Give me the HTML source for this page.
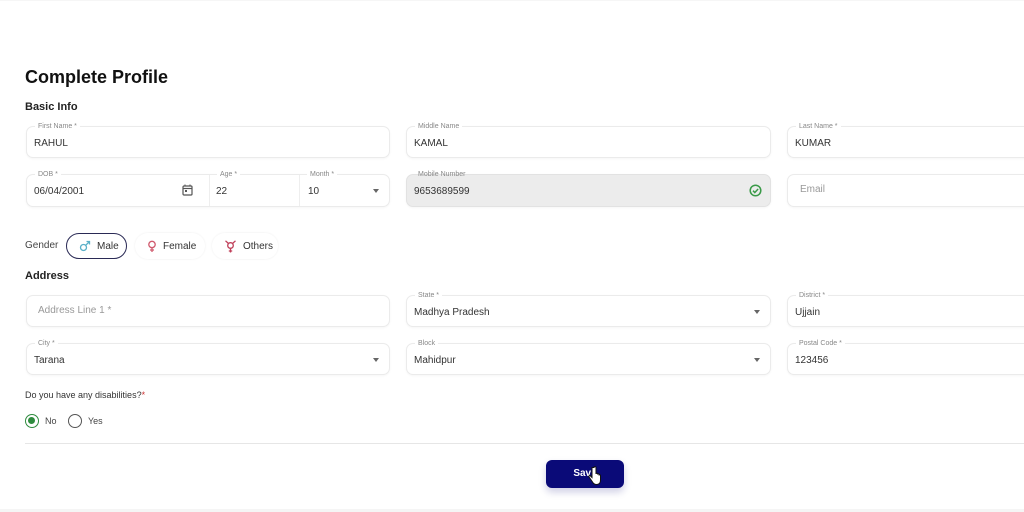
<!DOCTYPE html>
<html><head><meta charset="utf-8"><style>
*{box-sizing:border-box;margin:0;padding:0}
body{width:1024px;height:512px;overflow:hidden;background:#fff;font-family:"Liberation Sans",sans-serif;color:#222;position:relative}
.a{position:absolute}
.f{position:absolute;border:1px solid #ebebeb;border-radius:7px;background:#fff;box-shadow:0 1px 2px rgba(0,0,0,.04)}
.f .l{position:absolute;top:-5px;left:8px;background:#fff;font-size:7px;color:#888;padding:0 3px;line-height:9px}
.f .v{position:absolute;left:7px;top:11px;font-size:10px;color:#333}
.f .ph{color:#999}
.dd{position:absolute;right:10px;top:14px;width:0;height:0;border-left:3px solid transparent;border-right:3px solid transparent;border-top:4px solid #666}
h1{position:absolute;left:25px;top:67px;font-size:18px;font-weight:bold;color:#111}
.h2{font-size:11px;font-weight:bold;color:#222}
.chip{position:absolute;top:233px;height:26px;border-radius:13px;font-size:10px;color:#333;display:flex;align-items:center;padding-left:12px;gap:6px}
</style></head><body>
<div class="a" style="left:0;top:0;width:1024px;height:1px;background:#f6f6f6"></div>
<h1>Complete Profile</h1>
<div class="a h2" style="left:25px;top:101px">Basic Info</div>

<div class="f" style="left:26px;top:126px;width:364px;height:32px"><span class="l">First Name *</span><span class="v">RAHUL</span></div>
<div class="f" style="left:406px;top:126px;width:365px;height:32px"><span class="l">Middle Name</span><span class="v">KAMAL</span></div>
<div class="f" style="left:787px;top:126px;width:250px;height:32px"><span class="l">Last Name *</span><span class="v">KUMAR</span></div>

<div class="f" style="left:26px;top:174px;width:364px;height:33px">
 <span class="l">DOB *</span><span class="v">06/04/2001</span>
 <svg class="a" style="left:155px;top:9px" width="11" height="12" viewBox="0 0 11 12"><rect x="1" y="2" width="9" height="9" rx="1" fill="none" stroke="#555" stroke-width="1.2"/><line x1="1" y1="4.5" x2="10" y2="4.5" stroke="#555" stroke-width="1.2"/><rect x="3" y="6" width="2" height="2" fill="#555"/><line x1="3" y1="0.5" x2="3" y2="2.5" stroke="#555"/><line x1="8" y1="0.5" x2="8" y2="2.5" stroke="#555"/></svg>
 <div class="a" style="left:182px;top:0;width:1px;height:31px;background:#eee"></div>
 <span class="l" style="left:190px">Age *</span><span class="v" style="left:189px">22</span>
 <div class="a" style="left:272px;top:0;width:1px;height:31px;background:#eee"></div>
 <span class="l" style="left:280px">Month *</span><span class="v" style="left:281px">10</span>
 <span class="dd"></span>
</div>
<div class="f" style="left:406px;top:174px;width:365px;height:33px;background:#ececec;border-color:#e2e2e2"><span class="l" style="background:transparent">Mobile Number</span><span class="v">9653689599</span>
 <svg class="a" style="left:342px;top:9px" width="13" height="13" viewBox="0 0 13 13"><circle cx="6.5" cy="6.5" r="5.3" fill="none" stroke="#3a9a48" stroke-width="1.5"/><path d="M4 6.7l1.8 1.8 3.3-3.5" fill="none" stroke="#3a9a48" stroke-width="1.5"/></svg></div>
<div class="f" style="left:787px;top:174px;width:250px;height:33px"><span class="v ph" style="left:12px;top:9px">Email</span></div>

<div class="a" style="left:25px;top:240px;font-size:10px;color:#444">Gender</div>
<div class="chip" style="left:66px;width:61px;border:1.5px solid #2a2a55;color:#333">
 <svg width="12" height="12" viewBox="0 0 12 12"><circle cx="4.5" cy="7.5" r="3" fill="none" stroke="#5ab0c8" stroke-width="1.3"/><path d="M6.7 5.3L10.5 1.5M7.5 1.5h3v3" fill="none" stroke="#5ab0c8" stroke-width="1.3"/></svg>Male</div>
<div class="chip" style="left:135px;width:70px;box-shadow:0 0 2px rgba(0,0,0,.08)">
 <svg width="10" height="13" viewBox="0 0 10 13"><circle cx="5" cy="4.5" r="3.2" fill="none" stroke="#d05a6e" stroke-width="1.3"/><path d="M5 7.7V12M3 10h4" stroke="#d05a6e" stroke-width="1.3"/></svg>Female</div>
<div class="chip" style="left:212px;width:66px;box-shadow:0 0 2px rgba(0,0,0,.08)">
 <svg width="13" height="13" viewBox="0 0 13 13"><circle cx="6.5" cy="5.5" r="2.8" fill="none" stroke="#c0405a" stroke-width="1.3"/><path d="M6.5 8.3V12.5M4.8 11h3.4M4.5 3.5L1.5 0.8M8.5 3.5L11.5 0.8" stroke="#c0405a" stroke-width="1.3"/></svg>Others</div>

<div class="a h2" style="left:25px;top:270px">Address</div>
<div class="f" style="left:26px;top:295px;width:364px;height:32px"><span class="v ph" style="left:11px;top:9px">Address Line 1 *</span></div>
<div class="f" style="left:406px;top:295px;width:365px;height:32px"><span class="l">State *</span><span class="v">Madhya Pradesh</span><span class="dd"></span></div>
<div class="f" style="left:787px;top:295px;width:250px;height:32px"><span class="l">District *</span><span class="v">Ujjain</span></div>
<div class="f" style="left:26px;top:343px;width:364px;height:32px"><span class="l">City *</span><span class="v">Tarana</span><span class="dd"></span></div>
<div class="f" style="left:406px;top:343px;width:365px;height:32px"><span class="l">Block</span><span class="v">Mahidpur</span><span class="dd"></span></div>
<div class="f" style="left:787px;top:343px;width:250px;height:32px"><span class="l">Postal Code *</span><span class="v">123456</span></div>

<div class="a" style="left:25px;top:390px;font-size:9px;color:#333">Do you have any disabilities?<span style="color:#c33">*</span></div>
<div class="a" style="left:25px;top:414px;width:14px;height:14px;border-radius:50%;border:1.5px solid #2e8b3e"><div style="margin:2px;width:7px;height:7px;border-radius:50%;background:#2e8b3e"></div></div>
<div class="a" style="left:45px;top:416px;font-size:9px;color:#444">No</div>
<div class="a" style="left:68px;top:414px;width:14px;height:14px;border-radius:50%;border:1.2px solid #555"></div>
<div class="a" style="left:88px;top:416px;font-size:9px;color:#444">Yes</div>

<div class="a" style="left:25px;top:443px;width:999px;height:1px;background:#e6e6e6"></div>
<div class="a" style="left:546px;top:460px;width:78px;height:28px;border-radius:6px;background:#0a0a78;box-shadow:0 4px 8px rgba(10,10,120,.2);color:#fff;font-size:10px;font-weight:bold;text-align:center;line-height:28px">Save</div>
<svg class="a" style="left:588px;top:466px" width="14" height="20" viewBox="0 0 14 20"><path d="M4 1.5v10l-1.5-1.5c-1-1-2.2 0-1.4 1L4.5 16c1 1.8 2.2 2.5 4 2.5 2.6 0 4-1.8 4-4.5V9.5c0-1-1.4-1-1.5 0V8.5c0-1-1.4-1-1.5 0V8c0-1-1.5-1-1.5 0V1.5c0-1.2-2-1.2-2 0z" fill="#fff" stroke="#111" stroke-width="1"/></svg>
<div class="a" style="left:0;top:509px;width:1024px;height:3px;background:#f5f5f5"></div>
</body></html>
